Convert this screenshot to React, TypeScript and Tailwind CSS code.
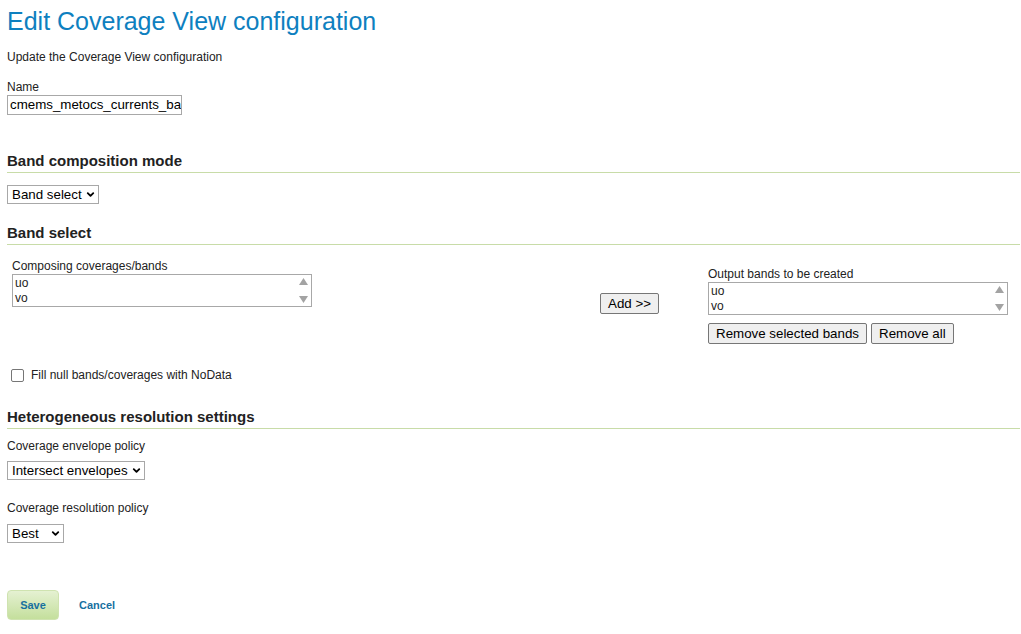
import React from 'react';
import { ChevronDown } from 'lucide-react';

const body = "font-['Liberation_Sans',Arial,sans-serif]";
const ctl = "font-['Liberation_Sans',Arial,sans-serif] text-[13.33px] text-black";

const Section: React.FC<{ title: string; children?: React.ReactNode }> = ({ title, children }) => (
  <div>
    <h3 className="text-[15px] font-bold text-[#222] leading-[18px] pb-[2px] border-b border-[#c8dca8]">{title}</h3>
    {children}
  </div>
);

const Dropdown: React.FC<{ value: string; width: string }> = ({ value, width }) => (
  <div className={`${width} h-[19px] flex items-center justify-between border border-[#a8a8a8] bg-white pl-[4px] pr-[2px] ${ctl}`}>
    <span className="leading-none">{value}</span>
    <ChevronDown size={11} strokeWidth={4} className="text-black" />
  </div>
);

const ListBox: React.FC<{ items: string[] }> = ({ items }) => (
  <div className={`w-[300px] h-[33px] flex border border-[#a8a8a8] bg-white ${body} text-[12px] text-[#222]`}>
    <div className="flex-1 pl-[2px] leading-[15px] pt-[1px]">
      {items.map(i => (
        <div key={i}>{i}</div>
      ))}
    </div>
    <div className="w-[15px] flex flex-col items-center justify-between py-[3px]">
      <svg width="9" height="7" viewBox="0 0 9 7"><path d="M4.5 0 L9 7 L0 7 Z" fill="#a3a3a3" /></svg>
      <svg width="9" height="7" viewBox="0 0 9 7"><path d="M0 0 L9 0 L4.5 7 Z" fill="#a3a3a3" /></svg>
    </div>
  </div>
);

const Btn: React.FC<{ label: string }> = ({ label }) => (
  <button className={`h-[21px] px-[7px] bg-[#efefef] border border-[#767676] rounded-[2px] leading-none ${ctl}`}>{label}</button>
);

export default function App() {
  return (
    <div className={`w-[1021px] h-[634px] bg-white ${body} text-[#222] pl-[7px] pr-[1px]`}>
      <h1 className="pt-[6px] text-[25px] leading-[30px] text-[#0e80bf]">Edit Coverage View configuration</h1>
      <p className="mt-[14px] text-[12px] leading-[14px]">Update the Coverage View configuration</p>

      <div className="mt-[16px]">
        <label className="block text-[12px] leading-[14px]">Name</label>
        <div className={`mt-[1px] w-[175px] h-[20px] border border-[#a8a8a8] overflow-hidden whitespace-nowrap pl-[2px] leading-[18px] ${ctl}`}>
          cmems_metocs_currents_ba
        </div>
      </div>

      <div className="mt-[37px]">
        <Section title="Band composition mode">
          <div className="mt-[12px]">
            <Dropdown value="Band select" width="w-[92px]" />
          </div>
        </Section>
      </div>

      <div className="mt-[20px]">
        <Section title="Band select">
          <div className="flex items-start pl-[5px] mt-[14px]">
            <div>
              <div className="text-[12px] leading-[14px]">Composing coverages/bands</div>
              <div className="mt-[1px]">
                <ListBox items={['uo', 'vo']} />
              </div>
            </div>
            <div className="ml-[288px] mt-[32px]">
              <Btn label="Add >>" />
            </div>
            <div className="ml-[49px] mt-[8px]">
              <div className="text-[12px] leading-[14px]">Output bands to be created</div>
              <div className="mt-[1px]">
                <ListBox items={['uo', 'vo']} />
              </div>
              <div className="flex gap-[4px] mt-[8px]">
                <Btn label="Remove selected bands" />
                <Btn label="Remove all" />
              </div>
            </div>
          </div>
          <label className="flex items-center pl-[4px] mt-[24px] text-[12px] leading-[14px]">
            <span className="w-[13px] h-[13px] border border-[#767676] rounded-[2px] bg-white" />
            <span className="ml-[7px]">Fill null bands/coverages with NoData</span>
          </label>
        </Section>
      </div>

      <div className="mt-[26px]">
        <Section title="Heterogeneous resolution settings">
          <div className="mt-[10px] text-[12px] leading-[14px]">Coverage envelope policy</div>
          <div className="mt-[8px]">
            <Dropdown value="Intersect envelopes" width="w-[138px]" />
          </div>
          <div className="mt-[21px] text-[12px] leading-[14px]">Coverage resolution policy</div>
          <div className="mt-[9px]">
            <Dropdown value="Best" width="w-[57px]" />
          </div>
        </Section>
      </div>

      <div className="mt-[47px] flex items-center">
        <button className="w-[52px] h-[30px] rounded-[4px] border border-[#cfe3b0] bg-gradient-to-b from-[#e5f1d2] to-[#c4df9c] text-[11px] font-bold text-[#17709f]">
          Save
        </button>
        <a className="ml-[20px] text-[11px] font-bold text-[#17709f]">Cancel</a>
      </div>
    </div>
  );
}
